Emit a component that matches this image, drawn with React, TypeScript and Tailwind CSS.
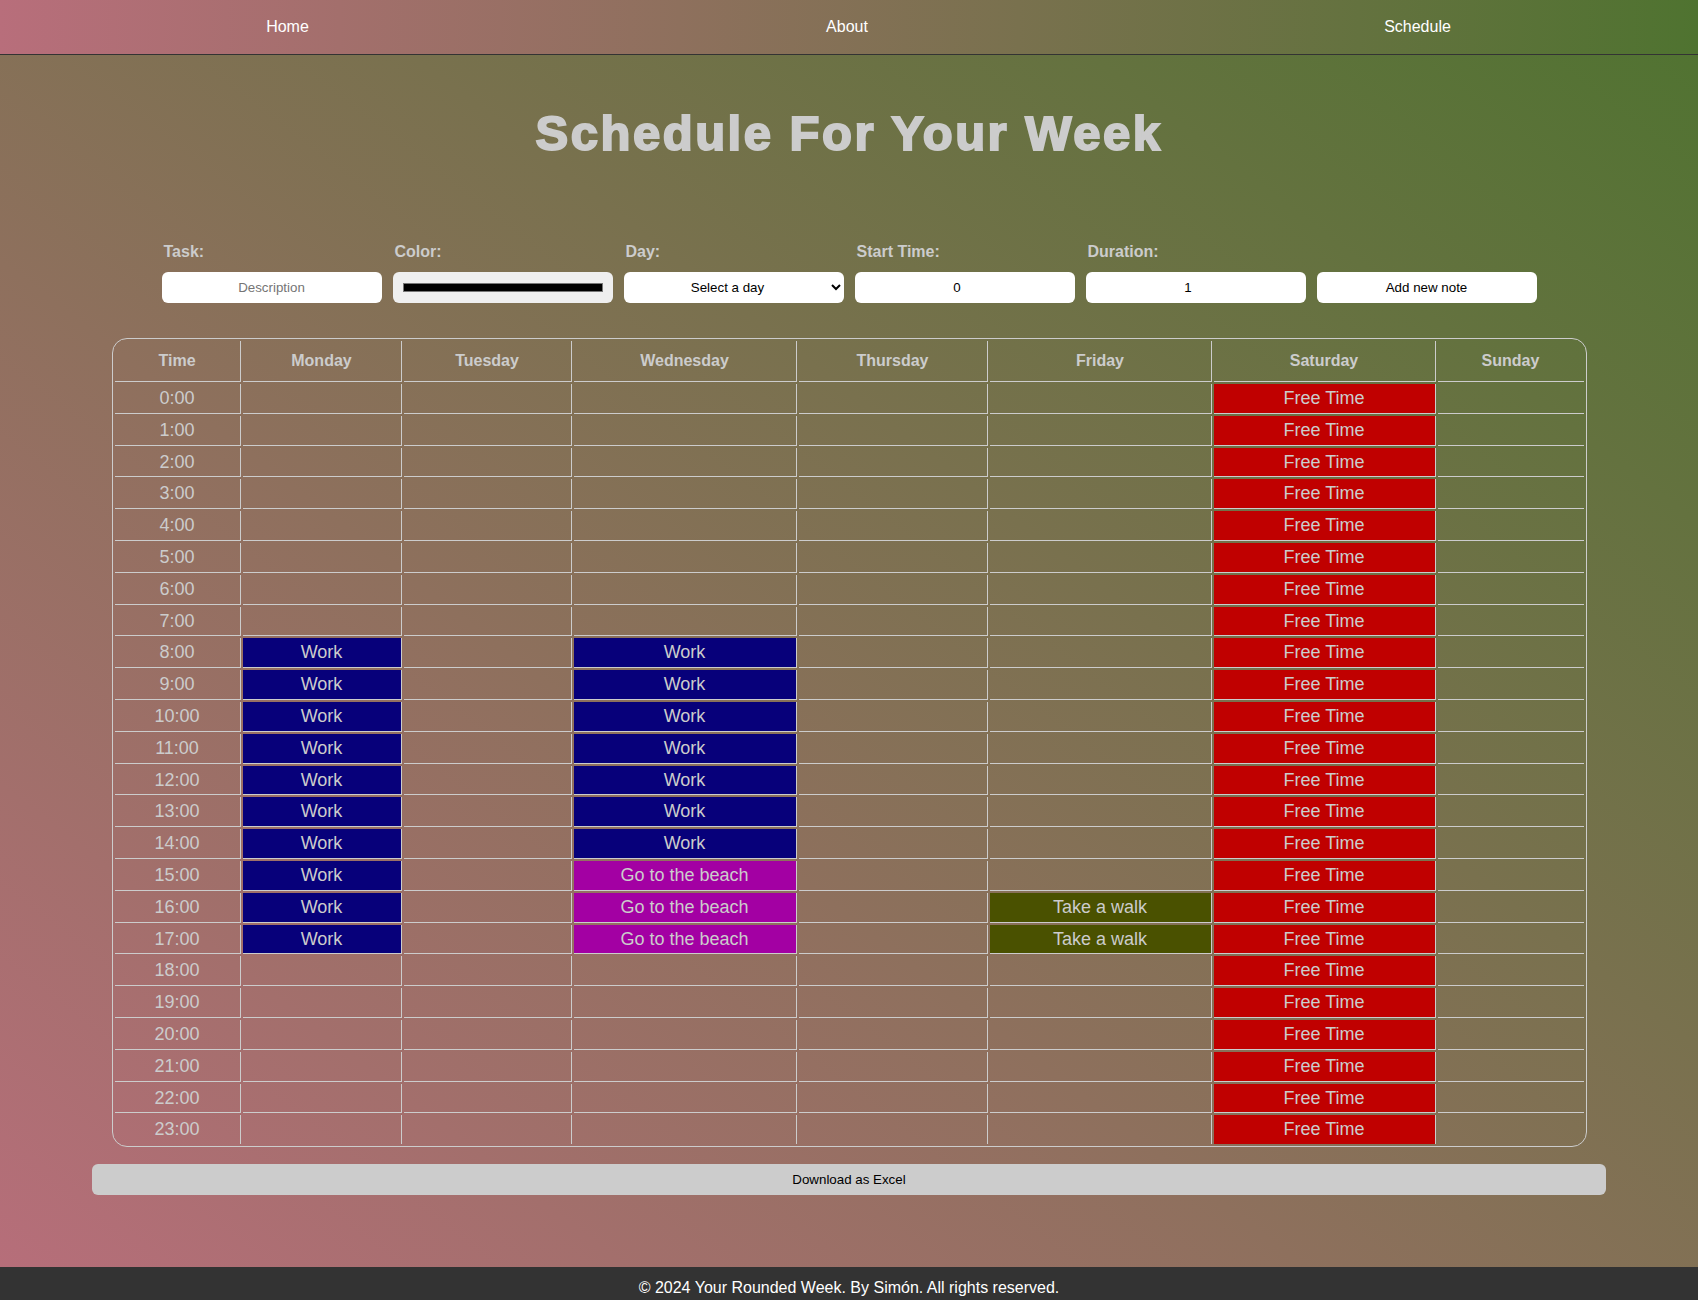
import React, { useState } from 'react';

const DAYS = ['Monday', 'Tuesday', 'Wednesday', 'Thursday', 'Friday', 'Saturday', 'Sunday'];

// widths of Time + the seven day columns
const COL_WIDTHS = ['w-[126px]', 'w-[159px]', 'w-[168px]', 'w-[223px]', 'w-[189px]', 'w-[222px]', 'w-[222px]', 'w-[146px]'];

interface Note {
  day: string;
  start: number;
  duration: number;
  text: string;
  color: string;
}

const NOTES: Note[] = [
  { day: 'Monday', start: 8, duration: 10, text: 'Work', color: 'bg-[#07007a]' },
  { day: 'Wednesday', start: 8, duration: 7, text: 'Work', color: 'bg-[#07007a]' },
  { day: 'Wednesday', start: 15, duration: 3, text: 'Go to the beach', color: 'bg-[#a300a3]' },
  { day: 'Friday', start: 16, duration: 2, text: 'Take a walk', color: 'bg-[#4a5100]' },
  { day: 'Saturday', start: 0, duration: 24, text: 'Free Time', color: 'bg-[#c00000]' },
];

function findNote(day: string, hour: number) {
  return NOTES.find((n) => n.day === day && hour >= n.start && hour < n.start + n.duration);
}

export default function App() {
  const [task, setTask] = useState('');
  const [color, setColor] = useState('#000000');
  const [day, setDay] = useState('');
  const [start, setStart] = useState('0');
  const [duration, setDuration] = useState('1');

  const hours = Array.from({ length: 24 }, (_, h) => h);

  return (
    <div className="min-h-screen flex flex-col font-['Liberation_Sans',Arial,sans-serif] bg-[linear-gradient(to_top_right,#b86e7b,#4f7330)]">
      <nav className="h-[55px] border-b border-[#333] bg-[linear-gradient(to_right,#b86e7b,#4f7330)] grid grid-cols-3 items-center text-center text-white text-[16px] leading-[normal]">
        <a href="#" className="pl-[9px]">Home</a>
        <a href="#" className="pr-[4px]">About</a>
        <a href="#" className="pl-[5px]">Schedule</a>
      </nav>

      <main className="flex flex-col items-center pb-[72px]">
        <h1 className="mt-[51px] text-[49px] leading-[54px] font-bold tracking-[2.5px] text-[#ccc] [-webkit-text-stroke:2px_#ccc]">
          Schedule For Your Week
        </h1>

        <div className="mt-[83px] flex items-end gap-[11px] text-[13.33px]">
          <div className="flex flex-col gap-[11px] w-[220px]">
            <label className="pl-[2px] text-[16px] leading-[18px] font-bold text-[#ccc]">Task:</label>
            <input
              type="text"
              placeholder="Description"
              value={task}
              onChange={(e) => setTask(e.target.value)}
              className="h-[31px] rounded-[6px] bg-white text-center text-black placeholder:text-[#757575] outline-none"
            />
          </div>
          <div className="flex flex-col gap-[11px] w-[220px]">
            <label className="pl-[2px] text-[16px] leading-[18px] font-bold text-[#ccc]">Color:</label>
            <input
              type="color"
              value={color}
              onChange={(e) => setColor(e.target.value)}
              className="h-[31px] w-full rounded-[6px] bg-[#efefef] p-0 border-0 [&::-webkit-color-swatch-wrapper]:px-[10px] [&::-webkit-color-swatch-wrapper]:py-[11px] [&::-webkit-color-swatch]:border-[#777]"
            />
          </div>
          <div className="flex flex-col gap-[11px] w-[220px]">
            <label className="pl-[2px] text-[16px] leading-[18px] font-bold text-[#ccc]">Day:</label>
            <select
              value={day}
              onChange={(e) => setDay(e.target.value)}
              className="h-[31px] rounded-[6px] bg-white text-black px-1 [text-align-last:center] outline-none"
            >
              <option value="">Select a day</option>
              {DAYS.map((d) => (
                <option key={d} value={d}>{d}</option>
              ))}
            </select>
          </div>
          <div className="flex flex-col gap-[11px] w-[220px]">
            <label className="pl-[2px] text-[16px] leading-[18px] font-bold text-[#ccc]">Start Time:</label>
            <input
              type="number"
              min={0}
              max={23}
              value={start}
              onChange={(e) => setStart(e.target.value)}
              className="h-[31px] rounded-[6px] bg-white text-center text-black outline-none"
            />
          </div>
          <div className="flex flex-col gap-[11px] w-[220px]">
            <label className="pl-[2px] text-[16px] leading-[18px] font-bold text-[#ccc]">Duration:</label>
            <input
              type="number"
              min={1}
              max={24}
              value={duration}
              onChange={(e) => setDuration(e.target.value)}
              className="h-[31px] rounded-[6px] bg-white text-center text-black outline-none"
            />
          </div>
          <button className="w-[220px] h-[31px] rounded-[6px] bg-white text-black">Add new note</button>
        </div>

        <table className="mt-[35px] table-fixed w-[1475px] border-separate border-spacing-[2px] border border-[#ccc] rounded-[15px] text-[#ccc] text-center">
          <colgroup>
            {COL_WIDTHS.map((w, i) => (
              <col key={i} className={w} />
            ))}
          </colgroup>
          <thead>
            <tr>
              {['Time', ...DAYS].map((h, i) => (
                <th
                  key={h}
                  className={`py-[11px] text-[16px] leading-[normal] font-bold border-b border-[#ccc] ${i < 7 ? 'border-r' : ''}`}
                >
                  {h}
                </th>
              ))}
            </tr>
          </thead>
          <tbody>
            {hours.map((hour) => {
              const last = hour === 23;
              return (
                <tr key={hour}>
                  <td className={`py-1 text-[18px] leading-[20.8px] border-r border-[#ccc] ${last ? '' : 'border-b'}`}>
                    {hour}:00
                  </td>
                  {DAYS.map((d, i) => {
                    const note = findNote(d, hour);
                    return (
                      <td
                        key={d}
                        className={`py-1 text-[18px] leading-[20.8px] border-[#ccc] ${last ? '' : 'border-b'} ${i < 6 ? 'border-r' : ''} ${note ? note.color : ''}`}
                      >
                        {note ? note.text : ''}
                      </td>
                    );
                  })}
                </tr>
              );
            })}
          </tbody>
        </table>

        <button className="mt-[17px] w-[1514px] h-[31px] rounded-[6px] bg-[#ccc] text-black text-[13.33px]">
          Download as Excel
        </button>
      </main>

      <footer className="bg-[#333] text-white text-center text-[16px] leading-[normal] py-3">
        © 2024 Your Rounded Week. By Simón. All rights reserved.
      </footer>
    </div>
  );
}
